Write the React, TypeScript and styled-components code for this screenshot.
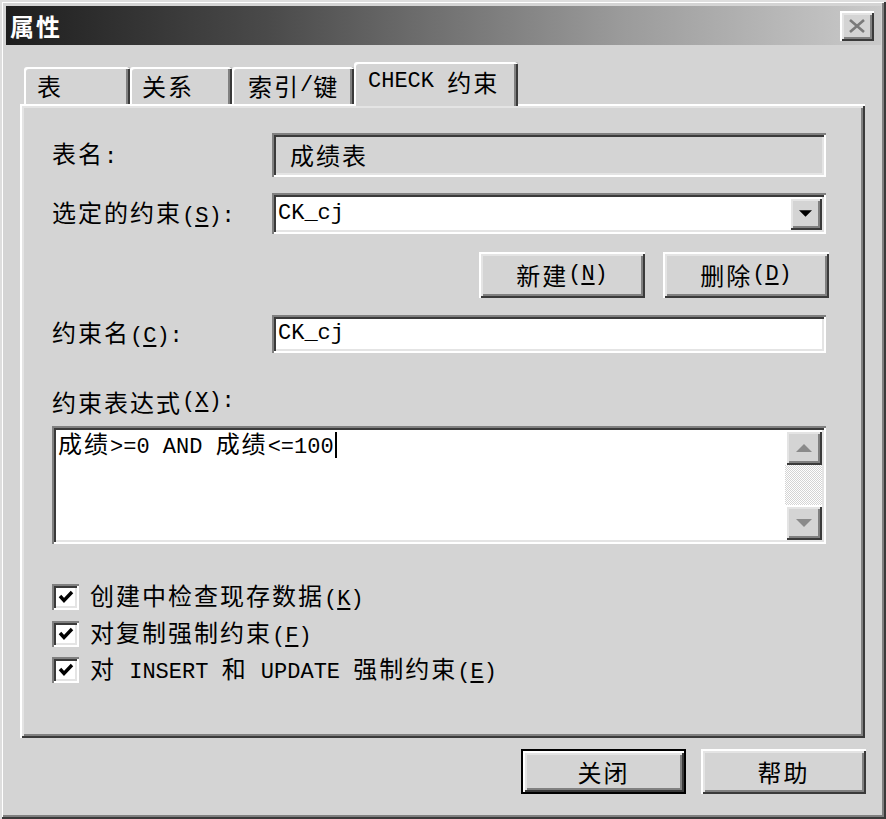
import React from "react";
import styled, { createGlobalStyle, css } from "styled-components";

const C = {
  face: "#d4d4d4",
  hi: "#ffffff",
  light: "#e4e4e4",
  shadow: "#808080",
  dark: "#3a3a3a",
};

const Global = createGlobalStyle`
  html, body { margin: 0; padding: 0; background: ${C.face}; }
  body { font-family: "Noto Sans CJK SC", "Noto Sans", sans-serif; color: #000; }
  * { box-sizing: border-box; }
`;

const raised = css`
  box-shadow: inset 2px 2px ${C.hi}, inset -2px -2px ${C.dark},
    inset 4px 4px ${C.light}, inset -4px -4px ${C.shadow};
`;

const sunken = css`
  box-shadow: inset 2px 2px ${C.shadow}, inset -2px -2px ${C.hi},
    inset 4px 4px ${C.dark}, inset -4px -4px ${C.light};
`;

/* ---------- mixed CJK / half-width text ---------- */
const Cjk = styled.span`
  font-family: "Noto Sans CJK SC", sans-serif;
  font-size: 24px;
  letter-spacing: 2px;
`;
const Latin = styled.span`
  font-family: "Liberation Mono", "DejaVu Sans Mono", monospace;
  font-size: 22px;
  white-space: pre;
`;
const Ul = styled.span`
  text-decoration: underline;
  text-underline-offset: 3px;
`;

const CJK_RE = /[\u2e80-\u9fff\uff00-\uffef]/;
function renderLatin(b: string) {
  const i = b.indexOf("&");
  if (i < 0) return b;
  return (
    <>
      {b.slice(0, i)}
      <Ul>{b[i + 1]}</Ul>
      {b.slice(i + 2)}
    </>
  );
}
function Txt({ s }: { s: string }) {
  const parts: React.ReactNode[] = [];
  let buf = "";
  let mode: "c" | "l" | null = null;
  let key = 0;
  const flush = () => {
    if (!buf) return;
    parts.push(
      mode === "l" ? <Latin key={key++}>{renderLatin(buf)}</Latin> : <Cjk key={key++}>{buf}</Cjk>
    );
    buf = "";
  };
  for (const ch of s) {
    const m = CJK_RE.test(ch) ? "c" : "l";
    if (m !== mode) {
      flush();
      mode = m;
    }
    buf += ch;
  }
  flush();
  return <>{parts}</>;
}

/* ---------- window chrome ---------- */
const Window = styled.div`
  width: 886px;
  height: 819px;
  padding: 6px 5px 0 6px;
  display: flex;
  flex-direction: column;
  background: ${C.face};
  box-shadow: inset 2px 2px #dedede, inset -2px -2px ${C.dark},
    inset 3px 3px ${C.hi}, inset -4px -4px ${C.shadow};
`;

const TitleBar = styled.div`
  height: 39px;
  display: flex;
  align-items: center;
  justify-content: space-between;
  padding: 0 7px 0 4px;
  background: linear-gradient(to right, #1e1e1e 0%, #4a4a4a 30%, #9a9a9a 70%, #cacaca 100%);
`;

const TitleText = styled.div`
  color: #fff;
  font-family: "Noto Sans CJK SC", sans-serif;
  font-weight: 700;
  font-size: 24px;
  letter-spacing: 2px;
  line-height: 1;
`;

const CloseBtn = styled.div`
  width: 34px;
  height: 30px;
  background: ${C.face};
  ${raised};
  display: flex;
  align-items: center;
  justify-content: center;
`;

const Body = styled.div`
  flex: 1;
  display: flex;
  flex-direction: column;
  padding: 17px 16px 0 14px;
`;

/* ---------- tabs ---------- */
const TabStrip = styled.div`
  height: 42px;
  display: flex;
  align-items: flex-end;
  padding-left: 4px;
  position: relative;
  z-index: 1;
`;

const Tab = styled.div<{ $w: number; $active?: boolean; $pl: number }>`
  width: ${(p) => p.$w}px;
  height: ${(p) => (p.$active ? 44 : 37)}px;
  margin-bottom: ${(p) => (p.$active ? -2 : 0)}px;
  padding-left: ${(p) => p.$pl}px;
  padding-bottom: ${(p) => (p.$active ? 5 : 0)}px;
  display: flex;
  align-items: center;
  background: ${C.face};
  border-radius: 3px 3px 0 0;
  line-height: 1;
  box-shadow: inset 2px 2px ${C.hi}, inset -2px 0 ${C.dark}, inset -4px 0 ${C.shadow};
`;

const Panel = styled.div`
  width: 845px;
  height: 634px;
  padding: 29px 39px 0 32px;
  display: flex;
  flex-direction: column;
  ${raised};
`;

/* ---------- form ---------- */
const FormRow = styled.div<{ $h: number; $mt?: number }>`
  display: grid;
  grid-template-columns: 220px 1fr;
  align-items: center;
  height: ${(p) => p.$h}px;
  margin-top: ${(p) => p.$mt ?? 0}px;
`;

const Label = styled.div`
  line-height: 1;
  white-space: nowrap;
`;

const ReadonlyField = styled.div`
  height: 100%;
  display: flex;
  align-items: center;
  padding-left: 18px;
  background: ${C.face};
  line-height: 1;
  ${sunken};
`;

const EditField = styled.div`
  height: 100%;
  display: flex;
  align-items: center;
  padding: 4px;
  background: #fff;
  line-height: 1;
  ${sunken};
`;

const FieldText = styled.div`
  flex: 1;
  padding-left: 2px;
`;

const DropBtn = styled.div`
  width: 33px;
  height: 100%;
  background: ${C.face};
  ${raised};
  display: flex;
  align-items: center;
  justify-content: center;
`;

const ButtonRow = styled.div`
  display: flex;
  justify-content: flex-end;
  gap: 18px;
  margin-top: 18px;
  margin-right: -3px;
`;

const Button = styled.div<{ $w: number; $h: number; $default?: boolean }>`
  width: ${(p) => p.$w}px;
  height: ${(p) => p.$h}px;
  display: flex;
  align-items: center;
  justify-content: center;
  background: ${C.face};
  line-height: 1;
  ${(p) =>
    p.$default
      ? css`
          box-shadow: inset 0 0 0 2px #000, inset 4px 4px ${C.hi}, inset -4px -4px ${C.dark},
            inset 6px 6px ${C.light}, inset -6px -6px ${C.shadow};
        `
      : raised};
`;

const ExprLabel = styled.div`
  margin-top: 37px;
  height: 24px;
  display: flex;
  align-items: center;
  line-height: 1;
`;

const TextArea = styled.div`
  margin-top: 12px;
  height: 118px;
  display: flex;
  padding: 4px;
  background: #fff;
  ${sunken};
`;

const TextContent = styled.div`
  flex: 1;
  padding: 2px 0 0 2px;
  line-height: 1;
  display: flex;
  height: 28px;
  align-items: center;
`;

const Caret = styled.span`
  display: inline-block;
  width: 2px;
  height: 26px;
  background: #000;
  margin-left: 1px;
`;

const ScrollBar = styled.div`
  width: 37px;
  display: flex;
  flex-direction: column;
`;

const ScrollBtn = styled.div`
  height: 35px;
  background: ${C.face};
  ${raised};
  display: flex;
  align-items: center;
  justify-content: center;
`;

const Track = styled.div`
  flex: 1;
  background-color: ${C.face};
  background-image: repeating-conic-gradient(#ffffff 0 25%, ${C.face} 0 50%);
  background-size: 2px 2px;
`;

const CheckList = styled.div`
  margin-top: 40px;
  display: flex;
  flex-direction: column;
  gap: 10.5px;
`;

const CheckRow = styled.div`
  display: flex;
  align-items: center;
  height: 26px;
  gap: 11px;
  line-height: 1;
`;

const CheckBox = styled.div`
  width: 27px;
  height: 26px;
  background: #fff;
  ${sunken};
  display: flex;
  align-items: center;
  justify-content: center;
`;

const Footer = styled.div`
  display: flex;
  justify-content: flex-end;
  gap: 15px;
  margin-top: 11px;
  margin-right: -1px;
`;

/* ---------- icons ---------- */
const CloseX = () => (
  <svg width="20" height="16" viewBox="0 0 20 16">
    <path d="M3 2 L17 14 M17 2 L3 14" stroke="#7a7a7a" strokeWidth="2.6" fill="none" />
  </svg>
);

const DownArrow = ({ color = "#000", w = 13 }: { color?: string; w?: number }) => (
  <svg width={w} height={Math.ceil(w / 2)} viewBox="0 0 14 7">
    <polygon points="0,0 14,0 7,7" fill={color} />
  </svg>
);

const UpArrow = ({ color = "#000", w = 13 }: { color?: string; w?: number }) => (
  <svg width={w} height={Math.ceil(w / 2)} viewBox="0 0 14 7">
    <polygon points="0,7 14,7 7,0" fill={color} />
  </svg>
);

const Check = () => (
  <svg width="18" height="18" viewBox="0 0 18 18">
    <polyline points="3,8 7,12.5 15,4" fill="none" stroke="#000" strokeWidth="3.4" />
  </svg>
);

const tabs = [
  { label: "表", w: 106, pl: 13 },
  { label: "关系", w: 102, pl: 12 },
  { label: "索引/键", w: 122, pl: 16 },
  { label: "CHECK 约束", w: 164, pl: 14, active: true },
];

const checks = ["创建中检查现存数据(&K)", "对复制强制约束(&F)", "对 INSERT 和 UPDATE 强制约束(&E)"];

export default function App() {
  return (
    <>
      <Global />
      <Window>
        <TitleBar>
          <TitleText>属性</TitleText>
          <CloseBtn>
            <CloseX />
          </CloseBtn>
        </TitleBar>
        <Body>
          <TabStrip>
            {tabs.map((t) => (
              <Tab key={t.label} $w={t.w} $pl={t.pl} $active={t.active}>
                <Txt s={t.label} />
              </Tab>
            ))}
          </TabStrip>
          <Panel>
            <FormRow $h={44}>
              <Label>
                <Txt s="表名:" />
              </Label>
              <ReadonlyField>
                <Txt s="成绩表" />
              </ReadonlyField>
            </FormRow>
            <FormRow $h={41} $mt={16}>
              <Label>
                <Txt s="选定的约束(&S):" />
              </Label>
              <EditField>
                <FieldText>
                  <Txt s="CK_cj" />
                </FieldText>
                <DropBtn>
                  <DownArrow />
                </DropBtn>
              </EditField>
            </FormRow>
            <ButtonRow>
              <Button $w={166} $h={46}>
                <Txt s="新建(&N)" />
              </Button>
              <Button $w={166} $h={46}>
                <Txt s="删除(&D)" />
              </Button>
            </ButtonRow>
            <FormRow $h={38} $mt={17}>
              <Label>
                <Txt s="约束名(&C):" />
              </Label>
              <EditField>
                <FieldText>
                  <Txt s="CK_cj" />
                </FieldText>
              </EditField>
            </FormRow>
            <ExprLabel>
              <Txt s="约束表达式(&X):" />
            </ExprLabel>
            <TextArea>
              <TextContent>
                <span>
                  <Txt s="成绩>=0 AND 成绩<=100" />
                </span>
                <Caret />
              </TextContent>
              <ScrollBar>
                <ScrollBtn>
                  <UpArrow color="#8a8a8a" w={16} />
                </ScrollBtn>
                <Track />
                <ScrollBtn>
                  <DownArrow color="#8a8a8a" w={16} />
                </ScrollBtn>
              </ScrollBar>
            </TextArea>
            <CheckList>
              {checks.map((c) => (
                <CheckRow key={c}>
                  <CheckBox>
                    <Check />
                  </CheckBox>
                  <span>
                    <Txt s={c} />
                  </span>
                </CheckRow>
              ))}
            </CheckList>
          </Panel>
          <Footer>
            <Button $w={165} $h={45} $default>
              <Txt s="关闭" />
            </Button>
            <Button $w={165} $h={45}>
              <Txt s="帮助" />
            </Button>
          </Footer>
        </Body>
      </Window>
    </>
  );
}
